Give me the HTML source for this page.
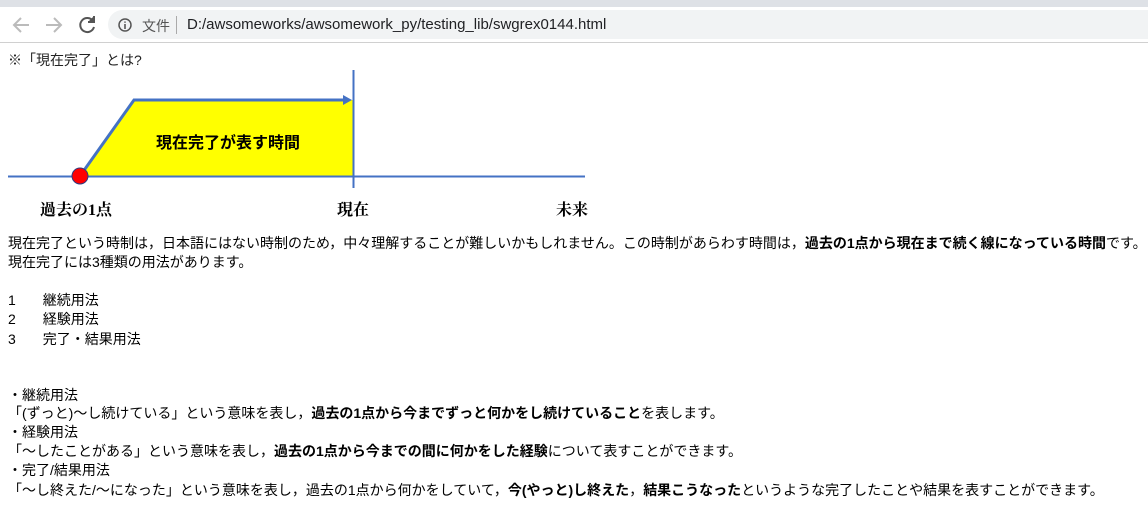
<!DOCTYPE html>
<html><head><meta charset="utf-8"><style>
body{margin:0;width:1148px;height:512px;overflow:hidden;background:#fff;font-family:"Liberation Sans","Noto Sans CJK JP",sans-serif;font-size:14px;color:#000;position:relative}
.t{position:absolute;left:8px;white-space:nowrap;line-height:19px}
b{font-weight:bold}
</style></head><body>
<div style="position:absolute;left:0;top:0;width:1148px;height:7px;background:#dee1e6"></div>
<div style="position:absolute;left:0;top:7px;width:1148px;height:35px;background:#fff;border-bottom:1px solid #d0d0d0"></div>
<div style="position:absolute;left:108px;top:10px;width:1060px;height:29px;border-radius:15px;background:#f1f3f4"></div>
<svg style="position:absolute;left:0;top:7px" width="110" height="35"><g fill="none" stroke-width="2"><path d="M29 18H15M21 11l-7 7 7 7" stroke="#bbb"/><path d="M46 18h14M54 11l7 7-7 7" stroke="#bbb"/><path d="M93 14a7 7 0 1 0 1 6" stroke="#555"/><path d="M94 9v6h-6" stroke="#555" fill="#555"/></g></svg>
<svg style="position:absolute;left:117px;top:17px" width="16" height="16"><circle cx="8" cy="8" r="6" fill="none" stroke="#555" stroke-width="1.5"/><path d="M8 7v5M8 4.5v1.2" stroke="#555" stroke-width="1.6"/></svg>
<div style="position:absolute;left:142px;top:16px;font-size:14px;color:#555">文件</div>
<div style="position:absolute;left:176px;top:16px;width:1px;height:18px;background:#aaa"></div>
<div style="position:absolute;left:187px;top:16px;font-size:15px;color:#202124">D:/awsomeworks/awsomework_py/testing_lib/swgrex0144.html</div>

<div class="t" style="top:51px;color:#222">※「現在完了」とは?</div>
<svg style="position:absolute;left:0;top:0" width="600" height="230">
<polygon points="80,176 133,100 353,100 353,176" fill="#ffff00"/>
<line x1="8" y1="176.5" x2="585" y2="176.5" stroke="#4472c4" stroke-width="2"/>
<line x1="353.5" y1="70" x2="353.5" y2="188" stroke="#4472c4" stroke-width="2"/>
<polyline points="80,176 134,100 345,100" fill="none" stroke="#4472c4" stroke-width="3"/>
<polygon points="343,95 352,100 343,105" fill="#4472c4"/>
<circle cx="80" cy="176" r="8" fill="#ff0000" stroke="#2f3a80" stroke-width="1"/>
<text x="228" y="148" text-anchor="middle" font-size="16" font-weight="bold" font-family="Liberation Sans,Noto Sans CJK JP,sans-serif">現在完了が表す時間</text>
<g font-size="16" font-weight="bold" font-family="Liberation Serif,Noto Serif CJK SC,serif"><text x="40" y="215">過去の1点</text><text x="337" y="215">現在</text><text x="556" y="215">未来</text></g>
</svg>
<div class="t" style="top:234px">現在完了という時制は，日本語にはない時制のため，中々理解することが難しいかもしれません。この時制があらわす時間は，<b>過去の1点から現在まで続く線になっている時間</b>です。</div>
<div class="t" style="top:253px">現在完了には3種類の用法があります。</div>
<div class="t" style="top:291px">1<span style="margin-left:27px">継続用法</span></div>
<div class="t" style="top:310px">2<span style="margin-left:27px">経験用法</span></div>
<div class="t" style="top:330px">3<span style="margin-left:27px">完了・結果用法</span></div>
<div class="t" style="top:386px">・継続用法</div>
<div class="t" style="top:404px">「(ずっと)～し続けている」という意味を表し，<b>過去の1点から今までずっと何かをし続けていること</b>を表します。</div>
<div class="t" style="top:423px">・経験用法</div>
<div class="t" style="top:442px">「～したことがある」という意味を表し，<b>過去の1点から今までの間に何かをした経験</b>について表すことができます。</div>
<div class="t" style="top:461px">・完了/結果用法</div>
<div class="t" style="top:481px">「～し終えた/～になった」という意味を表し，過去の1点から何かをしていて，<b>今(やっと)し終えた</b>，<b>結果こうなった</b>というような完了したことや結果を表すことができます。</div>
</body></html>
